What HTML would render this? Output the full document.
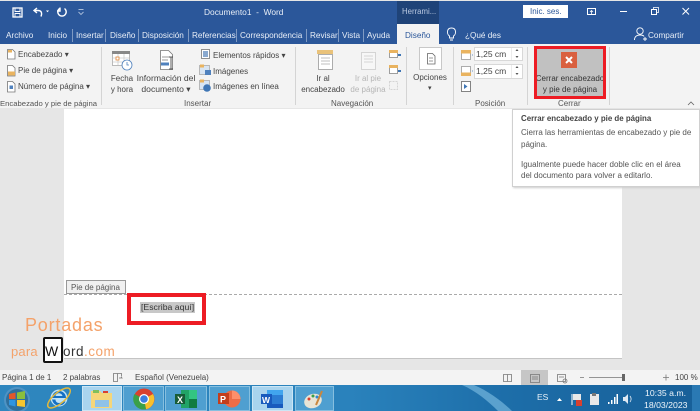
<!DOCTYPE html>
<html><head><meta charset="utf-8">
<style>
html,body{margin:0;padding:0;background:#fff}
#p{position:relative;width:700px;height:411px;overflow:hidden;font-family:"Liberation Sans",sans-serif;font-size:8px;color:#444;background:#e6e6e6;filter:blur(.3px)}
#p div,#p span.t{position:absolute}
.t{white-space:nowrap;line-height:11px}
.w{color:#e8eef7;font-size:8.2px}
.s{position:absolute;left:0;top:0}
.c{text-align:center;transform:translateX(-50%)}
.g{color:#555}
.sep{width:1px;height:13px;top:29px;background:#7f9ac3}
.rs{width:1px;height:58px;top:47px;background:#d4d4d4}
.tb{top:386px;height:25px;box-sizing:border-box;background:#4f9fd0;border:1px solid #86bfdf}
</style></head><body>
<div id="p">
<!-- title -->
<div style="left:0;top:1px;width:700px;height:43px;background:#2b579a"></div>
<div style="left:397px;top:1px;width:42px;height:23px;background:#1f4378"></div>
<div style="left:397px;top:24px;width:42px;height:20px;background:#f3f3f3"></div>
<div style="left:0;top:44px;width:700px;height:64px;background:#f3f3f3"></div>
<span class="t w" style="left:204px;top:7px;font-size:8.4px">Documento1 &nbsp;- &nbsp;Word</span>
<span class="t" style="left:402px;top:6px;font-size:7.8px;color:#b9c8e0">Herrami...</span>
<div style="left:523px;top:5px;width:45px;height:13px;background:#fff"></div>
<span class="t" style="left:530px;top:6px;font-size:8px;color:#2b579a">Inic. ses.</span>
<svg class="s" width="700" height="44" style="position:absolute" fill="none" stroke="#fff">
<rect x="13" y="8" width="9" height="9" stroke-width="1.300"/><path d="M15 8.500v3h5v-3M15 17v-3.500h5V17" stroke-width=".9"/>
<path d="M37 8l-3 2.500 3 2.500M34 10.500h4c3 0 4.500 2 3 6" stroke-width="1.400"/><path d="M46 10.500h3l-1.500 1.800z" fill="#fff" stroke="none"/>
<path d="M59.500 8.500a4.200 4.200 0 1 0 5 0M60 7.500v3.500h-3" stroke-width="1.400"/>
<path d="M78.500 9.500h5M78.500 12l2.500 2.500 2.500-2.500" stroke="#a9bcd9" stroke-width=".9"/>
<rect x="587.500" y="8.500" width="8" height="6"/><path d="M591.500 14v-3M590 12l1.500-1.500 1.500 1.500" stroke-width=".8"/>
<path d="M620 11.500h7" stroke-width="1"/>
<rect x="651.500" y="9.500" width="5" height="5"/><path d="M653.500 9.500v-2h5v5h-2" stroke-width=".8"/>
<path d="M682.500 8l6.500 6.500M689 8l-6.500 6.500" stroke-width="1"/>
<path d="M451.500 28c-5 0-5 6-2 8v2h4v-2c3-2 3-8-2-8zM450 40h3" stroke-width=".9"/>
<circle cx="640" cy="31" r="3.200" stroke-width=".9"/><path d="M634.500 40c0-3 2-5 5.500-5s4 1.500 4 1.500M645 37v4M643 39h4" stroke-width=".9"/>
</svg>
<!-- tabs -->
<span class="t w" style="left:6px;top:30px">Archivo</span>
<span class="t w" style="left:48px;top:30px">Inicio</span>
<span class="t w" style="left:76px;top:30px">Insertar</span>
<span class="t w" style="left:110px;top:30px">Diseño</span>
<span class="t w" style="left:142px;top:30px">Disposición</span>
<span class="t w" style="left:192px;top:30px">Referencias</span>
<span class="t w" style="left:240px;top:30px">Correspondencia</span>
<span class="t w" style="left:310px;top:30px">Revisar</span>
<span class="t w" style="left:342px;top:30px">Vista</span>
<span class="t w" style="left:367px;top:30px">Ayuda</span>
<span class="t" style="left:405px;top:30px;font-size:8.2px;color:#2b579a">Diseño</span>
<span class="t w" style="left:465px;top:30px">¿Qué des</span>
<span class="t w" style="left:648px;top:30px">Compartir</span>
<div class="sep" style="left:72px"></div>
<div class="sep" style="left:105px"></div>
<div class="sep" style="left:138px"></div>
<div class="sep" style="left:188px"></div>
<div class="sep" style="left:236px"></div>
<div class="sep" style="left:306px"></div>
<div class="sep" style="left:338px"></div>
<div class="sep" style="left:363px"></div>
<!-- separators -->
<div class="rs" style="left:101px"></div>
<div class="rs" style="left:295px"></div>
<div class="rs" style="left:406px"></div>
<div class="rs" style="left:453px"></div>
<div class="rs" style="left:527px"></div>
<div class="rs" style="left:609px"></div>
<!-- position boxes -->
<div style="left:474px;top:47px;width:49px;height:14px;background:#fff;border:1px solid #d8d8d8;box-sizing:border-box"></div>
<div style="left:474px;top:64px;width:49px;height:15px;background:#fff;border:1px solid #d8d8d8;box-sizing:border-box"></div>
<div style="left:419px;top:47px;width:23px;height:23px;background:#fff;border:1px solid #c8c8c8;box-sizing:border-box"></div>
<!-- ribbon text -->
<span class="t" style="left:18px;top:49px;font-size:8px">Encabezado ▾</span>
<span class="t" style="left:18px;top:65px;font-size:8px">Pie de página ▾</span>
<span class="t" style="left:18px;top:81px;font-size:8px">Número de página ▾</span>
<span class="t g" style="left:0;top:98px;font-size:7.700px">Encabezado y pie de página</span>
<span class="t c" style="left:122px;top:73px;font-size:8px">Fecha<br>y hora</span>
<span class="t c" style="left:166px;top:73px;font-size:8.600px">Información del<br>documento ▾</span>
<span class="t" style="left:213px;top:50px;font-size:8px">Elementos rápidos ▾</span>
<span class="t" style="left:213px;top:66px;font-size:8px">Imágenes</span>
<span class="t" style="left:213px;top:81px;font-size:8px">Imágenes en línea</span>
<span class="t g" style="left:184px;top:98px;font-size:8px">Insertar</span>
<span class="t c" style="left:323px;top:73px;font-size:8px">Ir al<br>encabezado</span>
<span class="t c" style="left:368px;top:73px;font-size:8px;color:#b5b5b5">Ir al pie<br>de página</span>
<span class="t g" style="left:331px;top:98px;font-size:8px">Navegación</span>
<span class="t c" style="left:430px;top:72px;font-size:8px">Opciones</span>
<span class="t" style="left:428px;top:83px;font-size:7px">▾</span>
<span class="t" style="left:476px;top:49px;font-size:8.500px">1,25 cm</span>
<span class="t" style="left:476px;top:66px;font-size:8.500px">1,25 cm</span>
<span class="t g" style="left:475px;top:98px;font-size:8px">Posición</span>
<span class="t g" style="left:558px;top:98px;font-size:8px">Cerrar</span>
<!-- ribbon icons -->
<svg class="s" width="700" height="110" style="position:absolute" fill="none" stroke="#777" stroke-width=".8">
<path d="M7.500 49.500h5l2.500 2.500v7H7.500z" fill="#fff"/><path d="M8 50h4v2.500H8z" fill="#e9b35f" stroke="none"/>
<path d="M7.500 65.500h5l2.500 2.500v8H7.500z" fill="#fff"/><path d="M8 71.500h7v4H8z" fill="#e9b35f" stroke="none"/>
<path d="M7.500 81.500h5l2.500 2.500v8H7.500z" fill="#fff"/><rect x="9.500" y="85.500" width="3.500" height="3.500" fill="#4f81bd" stroke="none"/>
<rect x="112.500" y="51.500" width="17" height="14" fill="#fff" stroke="#aaa"/><rect x="112" y="51" width="18" height="3" fill="#888" stroke="none"/>
<path d="M118 54v11M124 54v11M113 58h16M113 62h16" stroke="#ccc"/><rect x="116" y="57" width="3" height="3" stroke="#e2873a" fill="#fff"/>
<circle cx="127" cy="65" r="5" fill="#fff" stroke="#4f81bd"/><path d="M127 62v3h2" stroke="#4f81bd"/>
<path d="M160.500 50.500h8l4 4v15h-12z" fill="#fff"/><path d="M161 62.500h8v3h-8z" fill="#4f81bd" stroke="none"/><path d="M162 57h8M162 60h6"/><path d="M171 57v12M169 57h4M169 69h4" stroke="#333"/>
<rect x="201.500" y="49.500" width="8" height="9" fill="#fff"/><rect x="203" y="51" width="5" height="6" fill="#8aa9cf" stroke="none"/>
<rect x="199.500" y="65.500" width="10" height="9" fill="#d8e5f3" stroke="#aaa"/><rect x="205" y="70" width="6" height="5" fill="#4f81bd" stroke="none"/><rect x="200" y="64.500" width="4" height="3" fill="#e9b35f" stroke="none"/>
<rect x="199.500" y="80.500" width="10" height="9" fill="#d8e5f3" stroke="#aaa"/><circle cx="207" cy="88" r="3.800" fill="#3f76b5" stroke="none"/><rect x="200" y="79.500" width="4" height="3" fill="#e9b35f" stroke="none"/>
<rect x="318.500" y="54.500" width="14" height="15" fill="#fff" stroke="#999"/><rect x="317" y="50" width="16" height="4" fill="#e9c27a" stroke="none"/><path d="M321 58h9M321 61h9M321 64h9" stroke="#aaa"/>
<rect x="361.500" y="52.500" width="14" height="17" fill="#f7f7f7" stroke="#ccc"/><path d="M364 56h9M364 59h9M364 62h9" stroke="#ccc"/>
<rect x="389.500" y="50.500" width="8" height="7" fill="#fff" stroke="#888"/><rect x="389" y="50" width="9" height="3" fill="#e9b35f" stroke="none"/><path d="M398 55h3" stroke="#3f76b5" stroke-width="2"/>
<rect x="389.500" y="66.500" width="8" height="7" fill="#fff" stroke="#888"/><rect x="389" y="65" width="9" height="3" fill="#e9b35f" stroke="none"/><path d="M398 71h3" stroke="#3f76b5" stroke-width="2"/>
<rect x="389.500" y="81.500" width="8" height="8" stroke="#ccc" stroke-dasharray="2 1"/>
<path d="M427.500 53.500h5l2.500 2.500v8h-7.500z" fill="#fff" stroke="#666"/><path d="M429 58h4M429 61h4"/>
<rect x="461.500" y="50.500" width="9" height="9" fill="#fff" stroke="#999"/><rect x="461" y="50" width="10" height="3.500" fill="#e9b35f" stroke="none"/><path d="M472 55h1" stroke="#3f76b5"/>
<rect x="461.500" y="66.500" width="9" height="9" fill="#fff" stroke="#999"/><rect x="461" y="72.500" width="10" height="3.500" fill="#e9b35f" stroke="none"/><path d="M472 71h1" stroke="#3f76b5"/>
<rect x="461.500" y="81.500" width="9" height="10" fill="#fff" stroke="#666"/><path d="M464 84l3.500 2.500-3.500 2.500z" fill="#3f76b5" stroke="none"/>
<path d="M511.500 48v12M511.500 65v13" stroke="#e6e6e6"/>
<path d="M515.500 51l1.500-2 1.500 2zM515.500 56l1.500 2 1.500-2zM515.500 68l1.500-2 1.500 2zM515.500 73l1.500 2 1.500-2z" fill="#555" stroke="none"/>
<path d="M688 105l3-3 3 3" stroke="#666"/>
</svg>
<!-- close button -->
<div style="left:534px;top:46px;width:72px;height:53px;background:#c1c1c1"></div>
<div style="left:561px;top:52px;width:16px;height:16px;background:#d9603f"></div>
<svg class="s" width="700" height="110" style="position:absolute" fill="none"><path d="M566 57l6 6M572 57l-6 6" stroke="#fff" stroke-width="2"/></svg>
<span class="t c" style="left:570px;top:73px;font-size:8px;color:#333">Cerrar encabezado<br>y pie de página</span>
<div style="left:534px;top:46px;width:72px;height:53px;border:3px solid #ed1c24;box-sizing:border-box"></div>
<!-- document -->
<div style="left:0;top:108px;width:700px;height:262px;background:#e6e6e6"></div>
<div style="left:64px;top:109px;width:558px;height:249px;background:#fff"></div>
<div style="left:64px;top:358px;width:558px;height:1px;background:#c4c4c4"></div>
<div style="left:64px;top:293.500px;width:558px;height:0;border-top:1px dashed #aaa"></div>
<div style="left:66px;top:280px;width:60px;height:14px;background:#f0f0f0;border:1px solid #999;box-sizing:border-box"></div>
<span class="t" style="left:71px;top:282px;font-size:8px;color:#555">Pie de página</span>
<div style="left:127px;top:293px;width:79px;height:32px;border:4px solid #ed1c24;box-sizing:border-box"></div>
<div style="left:140px;top:302px;width:55px;height:11px;background:#c8c8c8"></div>
<span class="t" style="left:141px;top:302px;font-size:8.700px;color:#333">[Escriba aquí]</span>
<!-- logo -->
<span class="t" style="left:25px;top:315px;font-size:18px;line-height:20px;letter-spacing:.8px;color:#f4a26a">Portadas</span>
<span class="t" style="left:11px;top:344px;font-size:13px;line-height:15px;letter-spacing:.2px;color:#f4a26a">para</span>
<div style="left:43px;top:337px;width:20px;height:26px;border:2px solid #111;border-radius:2px;box-sizing:border-box;background:#fff"></div>
<span class="t" style="left:45px;top:343px;font-size:14px;line-height:16px;color:#111">W</span>
<span class="t" style="left:63px;top:344px;font-size:13.500px;line-height:15px;letter-spacing:.5px;color:#333">ord<span style="color:#f4a26a">.com</span></span>
<!-- status -->
<div style="left:0;top:370px;width:700px;height:15px;background:#f3f3f3"></div>
<span class="t" style="left:2px;top:372px;font-size:8px">Página 1 de 1</span>
<span class="t" style="left:63px;top:372px;font-size:8px">2 palabras</span>
<span class="t" style="left:135px;top:372px;font-size:8px">Español (Venezuela)</span>
<span class="t" style="left:675px;top:372px;font-size:8px">100 %</span>
<div style="left:521px;top:370px;width:27px;height:15px;background:#c6c6c6"></div>
<svg class="s" width="700" height="385" style="position:absolute" fill="none" stroke="#777" stroke-width=".8">
<path d="M113.500 373.500h4v8h-4zM117.500 373.500h4v3M119 378h3l-1-1" />
<path d="M503.500 374.500h4v7h-4zM507.500 374.500h4v7h-4z"/>
<path d="M530.500 374.500h9v8h-9zM532 377h6M532 379h6"/>
<path d="M557.500 374.500h8v7h-8zM559 377h5"/><circle cx="565" cy="381" r="2"/>
<path d="M580 377.500h4M589 377.500h36M663 377.500h6M666 374.500v6"/>
<rect x="622" y="374" width="3" height="7" fill="#666" stroke="none"/>
</svg>
<!-- taskbar -->
<div style="left:0;top:385px;width:700px;height:26px;background:linear-gradient(90deg,#2f86be 0%,#2a82bc 50%,#1d6ea9 72%,#175f98 100%)"></div>
<svg class="s" width="700" height="411" style="position:absolute"><path d="M462 385h12c14 6 28 16 38 26h-14c-10-10-22-20-36-26z" fill="#6fb2da" opacity=".75"/><rect x="692" y="385" width="8" height="26" fill="#2a79b3"/></svg>
<div class="tb" style="left:82px;width:40px;background:#a9d4ee;border-color:#cbe6f5"></div>
<div class="tb" style="left:123px;width:41px"></div>
<div class="tb" style="left:165px;width:42px"></div>
<div class="tb" style="left:209px;width:41px"></div>
<div class="tb" style="left:252px;width:41px;background:#a9d4ee;border-color:#cbe6f5"></div>
<div class="tb" style="left:295px;width:39px"></div>
<svg class="s" width="700" height="411" style="position:absolute">
<circle cx="17" cy="400" r="13" fill="#4f93c4"/><circle cx="17" cy="400" r="11" fill="#2f6f9c"/>
<path d="M9 394l6.500-1.500v6.500H9z" fill="#e2572b"/><path d="M17 392.500l8-1.500v8h-8z" fill="#8abf3c"/><path d="M9 400h6.500v6.500L9 405z" fill="#2f95e0"/><path d="M17 400h8v7l-8-1z" fill="#f7c52f"/>
<circle cx="59" cy="398" r="8.500" fill="#bfe3f7"/>
<path d="M52 398h14c0-4-3-7-7-7s-7 3-7 7c0 4.500 3 7.500 7 7.500 3 0 5.500-1.500 6.500-4h-3.500c-.7 1-1.700 1.500-3 1.500-2 0-3.500-1.500-3.500-3.500h-3.500zM55.500 396c.3-1.600 1.700-2.800 3.500-2.800s3.200 1.200 3.500 2.800z" fill="#1570c4" fill-rule="evenodd"/>
<ellipse cx="59" cy="398" rx="14" ry="5.500" fill="none" stroke="#e3b93c" stroke-width="1.500" transform="rotate(-40 59 398)"/>
<path d="M91 391h9l2 2h10v15H91z" fill="#f5d679"/><path d="M95 400h14v7H95z" fill="#8fc2e8"/><path d="M93 390h6v3h-6z" fill="#7fbf5e"/><path d="M103 391h5v2h-5z" fill="#d9402f"/>
<circle cx="144" cy="399" r="10.500" fill="#d9402f"/><path d="M144 399L153 394A10.500 10.500 0 0 1 146 409.300z" fill="#f6c02d"/><path d="M144 399L146 409.300A10.500 10.500 0 0 1 134.500 394z" fill="#3aa04a"/><circle cx="144" cy="399" r="5" fill="#fff"/><circle cx="144" cy="399" r="3.800" fill="#3b7de0"/>
<rect x="181" y="390" width="16" height="18" fill="#21a366"/><rect x="189" y="390" width="8" height="9" fill="#33c481"/><rect x="189" y="399" width="8" height="9" fill="#107c41"/><rect x="175" y="394" width="10" height="10" fill="#185c37"/><text x="177" y="403" font-family="Liberation Sans" font-size="9" font-weight="bold" fill="#fff">X</text>
<circle cx="232" cy="399" r="8.500" fill="#ed6c47"/><path d="M232 399v-8.500a8.500 8.500 0 0 1 8.500 8.500z" fill="#ff8f6b"/><rect x="218" y="393" width="11" height="11" fill="#c43e1c"/><text x="220" y="402.500" font-family="Liberation Sans" font-size="9" font-weight="bold" fill="#fff">P</text>
<rect x="267" y="390" width="16" height="18" fill="#2b7cd3"/><rect x="267" y="390" width="16" height="5" fill="#41a5ee"/><rect x="267" y="404" width="16" height="4" fill="#185abd"/><rect x="261" y="394" width="11" height="10" fill="#185abd"/><text x="262" y="403" font-family="Liberation Sans" font-size="8.500" font-weight="bold" fill="#fff">W</text>
<ellipse cx="313" cy="401" rx="9" ry="7" fill="#e9e4d5" transform="rotate(-20 313 401)"/><circle cx="309" cy="399" r="1.500" fill="#d9402f"/><circle cx="313" cy="396" r="1.500" fill="#3aa04a"/><circle cx="317" cy="397" r="1.500" fill="#2f89d6"/><path d="M316 405l6-14" stroke="#c9873e" stroke-width="2"/>
<!-- tray -->
<path d="M557 401h5l-2.500-3z" fill="#fff"/>
<path d="M572 394v11" stroke="#fff"/><path d="M573 394h8v6h-8z" fill="#e8e8e8"/><rect x="576" y="400" width="6" height="6" fill="#d9402f"/>
<rect x="590" y="394" width="9" height="11" fill="#e8e8e8"/><rect x="592" y="393" width="4" height="3" fill="#777"/>
<path d="M608 402h1.500v2H608zM611 400h1.500v4H611zM614 397h1.500v7H614zM616.500 394h1.500v10h-1.500z" fill="#fff"/>
<path d="M623 397h2l3-3v10l-3-3h-2z" fill="#dfe9f3"/><path d="M630 396c1.500 2 1.500 4 0 6" stroke="#dfe9f3" fill="none" stroke-width=".8"/>
</svg>
<span class="t" style="left:537px;top:392px;font-size:8.500px;color:#e8f1f8">ES</span>
<span class="t" style="left:645px;top:388px;font-size:8.700px;color:#f0f6fb">10:35 a.m.</span>
<span class="t" style="left:644px;top:400px;font-size:8.700px;color:#f0f6fb">18/03/2023</span>
<!-- tooltip -->
<div style="left:512px;top:109px;width:188px;height:78px;background:#fff;border:1px solid #d0d0d0;box-sizing:border-box;box-shadow:1px 1px 2px #ccc"></div>
<span class="t" style="left:521px;top:113px;font-size:7.900px;font-weight:bold;color:#444">Cerrar encabezado y pie de página</span>
<span class="t" style="left:521px;top:127px;font-size:8px;color:#555;line-height:12px">Cierra las herramientas de encabezado y pie de<br>página.</span>
<span class="t" style="left:521px;top:159px;font-size:8px;color:#555;line-height:11px">Igualmente puede hacer doble clic en el área<br>del documento para volver a editarlo.</span>
</div>
</body></html>
